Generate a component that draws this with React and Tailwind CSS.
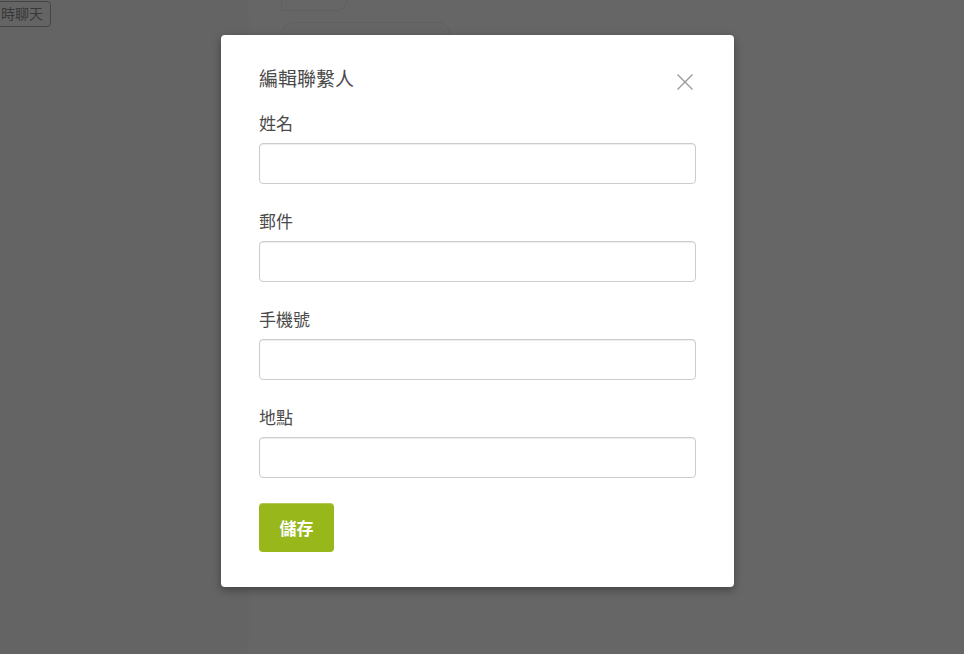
import { useState } from "react";

const fields = [
  { key: "name", label: "姓名" },
  { key: "email", label: "郵件" },
  { key: "phone", label: "手機號" },
  { key: "place", label: "地點" },
];

function CloseIcon() {
  return (
    <svg width="16" height="16" viewBox="0 0 16 16" fill="none">
      <path d="M0.5 0.5 L15.5 15.5 M15.5 0.5 L0.5 15.5" stroke="#9a9a9a" strokeWidth="1.4" />
    </svg>
  );
}

function EditContactModal() {
  const [form, setForm] = useState({ name: "", email: "", phone: "", place: "" });

  return (
    <div className="w-[513px] bg-white rounded-[4px] shadow-[0_3px_9px_rgba(0,0,0,0.35)] px-[38px] pt-[30px] pb-[35px]">
      <div className="flex justify-between items-start">
        <h2 className="text-[19px] leading-[26px] text-[#4a4a4a]">編輯聯繫人</h2>
        <button className="mt-[9px] mr-[3px]">
          <CloseIcon />
        </button>
      </div>

      <div className="mt-[20px]">
        {fields.map((f) => (
          <div key={f.key} className="mb-[25px]">
            <label className="block text-[17px] leading-[24px] text-[#4a4a4a] mb-[8px]">{f.label}</label>
            <input
              value={form[f.key]}
              onChange={(e) => setForm({ ...form, [f.key]: e.target.value })}
              className="block w-full h-[41px] px-3 border border-[#cccccc] rounded-[4px] shadow-[inset_0_1px_1px_rgba(0,0,0,0.075)] outline-none"
            />
          </div>
        ))}
      </div>

      <button className="block w-[75px] h-[49px] bg-[#97b71b] rounded-[4px] shadow-[inset_0_1px_0_rgba(255,255,255,0.25)] text-white font-bold text-[17px]">
        儲存
      </button>
    </div>
  );
}

export default function App() {
  return (
    <div className="relative w-[964px] h-[654px] overflow-hidden bg-white font-['Noto_Sans_CJK_TC',sans-serif]">
      {/* page behind */}
      <div className="flex h-full">
        <div className="w-[244px] h-full bg-[#fafafa] shadow-[2px_0_8px_rgba(0,0,0,0.04)]">
          <button className="-ml-[4px] -mt-[1px] pl-[4px] pr-[7px] h-[26px] border border-[#aaaaaa] rounded-[4px] text-[14px] text-[#8c8c8c]">
            時聊天
          </button>
        </div>
        <div className="flex-1 pl-[37px]">
          <div className="-mt-[20px] w-[66px] h-[31px] border border-[#f0f0f0] rounded-br-[10px] bg-white" />
          <div className="mt-[11px] w-[169px] h-[50px] border border-[#f0f0f0] rounded-[12px] bg-[#fdfdfd]" />
        </div>
      </div>

      {/* overlay */}
      <div className="absolute inset-0 bg-black/60 flex items-start pl-[221px] pt-[35px]">
        <EditContactModal />
      </div>
    </div>
  );
}
